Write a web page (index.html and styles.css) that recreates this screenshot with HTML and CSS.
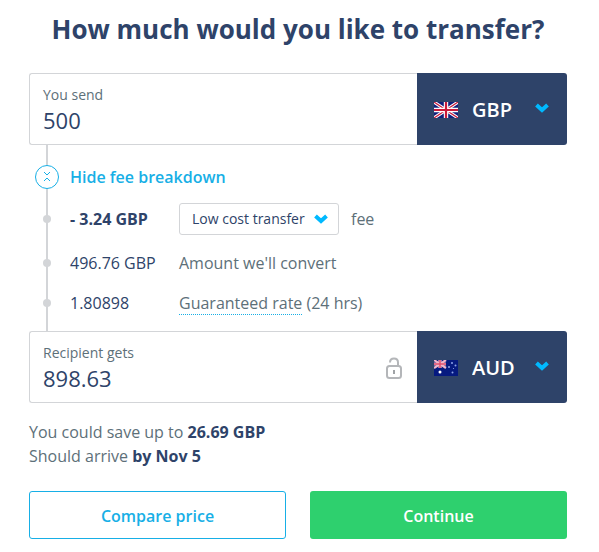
FILE: index.html
```html
<!DOCTYPE html>
<html lang="en">
<head>
<meta charset="utf-8">
<meta name="viewport" content="width=device-width, initial-scale=1">
<title>Transfer</title>
<link rel="stylesheet" href="styles.css">
</head>
<body>
<main class="calculator">
  <h1 class="title">How much would you like to transfer?</h1>
  <form>
    <div class="money">
      <div class="money-entry">
        <div class="money-text">
          <label class="money-label" for="send">You send</label>
          <input class="money-input" id="send" type="text" value="500">
        </div>
      </div>
      <div class="currency">
        <svg class="flag" viewBox="0 0 24 16" aria-hidden="true">
          <path fill="#10207c" d="M0 0h24v16H0z"/>
          <path stroke="#fff" stroke-width="3.2" d="M0 0l24 16M24 0L0 16"/>
          <path stroke="#c9193a" stroke-width="1.2" d="M0 0l24 16M24 0L0 16"/>
          <path stroke="#fff" stroke-width="4.4" d="M12 0v16M0 8h24"/>
          <path stroke="#c9193a" stroke-width="2.2" d="M12 0v16M0 8h24"/>
        </svg>
        <select class="currency-select" aria-label="Currency you send"><option>GBP</option></select>
        <svg class="chevron" viewBox="0 0 14 10" aria-hidden="true"><path d="M1.5 2L7 7l5.5-5"/></svg>
      </div>
    </div>

    <div class="breakdown">
      <button class="toggle" type="button">
        <svg class="toggle-icon" viewBox="0 0 24 24" aria-hidden="true">
          <circle cx="12" cy="12" r="11.5"/>
          <path d="M9 7l3 3 3-3M9 16l3-3 3 3"/>
        </svg>
        Hide fee breakdown
      </button>
      <ul class="steps">
        <li class="step">
          <span class="dot"></span>
          <strong class="amount">- 3.24 GBP</strong>
          <span class="detail fee">
            <span class="fee-box">
              <select class="fee-select" id="fee"><option>Low cost transfer</option></select>
              <svg class="chevron" viewBox="0 0 14 10" aria-hidden="true"><path d="M1.5 2L7 7l5.5-5"/></svg>
            </span>
            <label for="fee">fee</label>
          </span>
        </li>
        <li class="step">
          <span class="dot"></span>
          <span class="amount">496.76 GBP</span>
          <span class="detail">Amount we'll convert</span>
        </li>
        <li class="step">
          <span class="dot"></span>
          <span class="amount">1.80898</span>
          <span class="detail"><a class="rate" href="#">Guaranteed rate</a> (24 hrs)</span>
        </li>
      </ul>
    </div>

    <div class="money">
      <div class="money-entry">
        <div class="money-text">
          <label class="money-label" for="receive">Recipient gets</label>
          <input class="money-input" id="receive" type="text" value="898.63">
        </div>
        <svg class="lock" viewBox="0 0 16 22" aria-hidden="true">
          <rect x="1" y="9" width="14" height="12" rx="2.5"/>
          <path d="M4 5.5C4 3 5.5 1.5 8 1.5s4 1.500 4 4V9"/>
          <path class="keyhole" d="M7 13h2v4H7z"/>
        </svg>
      </div>
      <div class="currency">
        <svg class="flag" viewBox="0 0 24 16" aria-hidden="true">
          <path fill="#061a80" d="M0 0h24v16H0z"/>
          <path stroke="#f3b6c8" stroke-width="2.2" d="M0 0l12 8M12 0L0 8"/>
          <path stroke="#f3b6c8" stroke-width="3.2" d="M6 0v8M0 4h12"/>
          <path stroke="#e0506f" stroke-width="1.5" d="M6 0v8M0 4h12"/>
          <circle cx="6" cy="12" r="1.5" fill="#fff"/>
          <g fill="#8fa5e8">
            <circle cx="18" cy="3" r="1"/><circle cx="15" cy="7" r="1"/>
            <circle cx="21.5" cy="5.5" r="1"/><circle cx="18.5" cy="12.5" r="1"/>
            <circle cx="19.5" cy="8.5" r=".6"/>
          </g>
        </svg>
        <select class="currency-select" aria-label="Currency recipient gets"><option>AUD</option></select>
        <svg class="chevron" viewBox="0 0 14 10" aria-hidden="true"><path d="M1.5 2L7 7l5.5-5"/></svg>
      </div>
    </div>

    <p class="summary">You could save up to <strong>26.69 GBP</strong><br>Should arrive <strong>by Nov 5</strong></p>

    <div class="actions">
      <button class="button button-outline" type="button">Compare price</button>
      <button class="button button-primary" type="submit">Continue</button>
    </div>
  </form>
</main>
</body>
</html>
```
FILE: styles.css
```css
:root {
  --navy: #2e4369;
  --grey: #5d7079;
  --blue: #00b9ff;
  --link: #17afe6;
  --line: #d3d5d8;
}

* {
  box-sizing: border-box;
}

body {
  margin: 0;
  background: #fff;
  color: var(--grey);
  font: 16px/24px "Open Sans", "Noto Sans", sans-serif;
}

button,
input,
select {
  margin: 0;
  padding: 0;
  border: 0;
  background: none;
  color: inherit;
  font: inherit;
  appearance: none;
}

svg {
  display: block;
  flex: none;
  fill: none;
}

strong {
  color: var(--navy);
  font-weight: 700;
}

.calculator {
  padding: 9px 32px 12px 29px;
}

.title {
  margin: 0 0 24px;
  color: var(--navy);
  font-size: 26px;
  font-weight: 700;
  line-height: 40px;
  text-align: center;
}

.money {
  display: flex;
  height: 72px;
}

.money-entry {
  display: flex;
  flex: 1;
  align-items: center;
  min-width: 0;
  padding: 2px 15px 0 13px;
  border: 1px solid var(--line);
  border-right: 0;
  border-radius: 3px 0 0 3px;
}

.money-text {
  flex: 1;
  min-width: 0;
}

.money-label {
  display: block;
  font-size: 14px;
  line-height: 20px;
}

.money-input {
  display: block;
  width: 100%;
  height: 30px;
  color: var(--navy);
  font-size: 22px;
}

.lock {
  width: 16px;
  height: 22px;
  stroke: #b4b6b9;
  stroke-width: 2;
}

.lock .keyhole {
  fill: #a0a3a6;
  stroke: none;
}

.currency {
  display: flex;
  flex: none;
  align-items: center;
  width: 150px;
  padding: 2px 18px 0 17px;
  border-radius: 0 3px 3px 0;
  background: var(--navy);
}

.flag {
  width: 24px;
  height: 16px;
  margin-right: 14px;
}

.currency-select {
  flex: 1;
  min-width: 0;
  height: 40px;
  color: #fff;
  font-size: 20px;
  font-weight: 600;
}

.chevron {
  width: 14px;
  height: 10px;
  stroke: var(--blue);
  stroke-width: 4;
}

.currency .chevron {
  margin-bottom: 5px;
}

.breakdown {
  padding: 20px 0 16px;
  background: linear-gradient(var(--line), var(--line)) 17px 0 / 2px 100% no-repeat;
}

.toggle {
  display: flex;
  gap: 11px;
  margin-left: 6px;
  color: var(--link);
  font-weight: 600;
}

.toggle-icon {
  width: 24px;
  height: 24px;
  stroke: var(--link);
}

.toggle-icon circle {
  fill: #fff;
}

.steps {
  display: grid;
  gap: 16px;
  margin: 14px 0 0;
  padding: 0;
  list-style: none;
}

.step {
  display: grid;
  grid-template-columns: 8px 90px 1fr;
  column-gap: 19px;
  align-items: center;
  padding-left: 14px;
}

.dot {
  height: 8px;
  border-radius: 50%;
  background: var(--line);
}

.amount {
  color: var(--navy);
  white-space: nowrap;
}

.fee {
  display: flex;
  gap: 12px;
  align-items: center;
}

.fee-box {
  display: flex;
  align-items: center;
  width: 160px;
  height: 32px;
  padding: 0 10px 0 12px;
  border: 1px solid var(--line);
  border-radius: 3px;
}

.fee-select {
  flex: 1;
  min-width: 0;
  height: 30px;
  color: var(--navy);
  font-size: 14px;
}

.rate {
  border-bottom: 1px dotted var(--link);
  color: inherit;
  text-decoration: none;
}

.summary {
  margin: 17px 0 23px;
}

.actions {
  display: grid;
  grid-template-columns: 1fr 1fr;
  gap: 24px;
}

.button {
  height: 48px;
  padding-top: 2px;
  border-radius: 3px;
  font-weight: 600;
}

.button-outline {
  border: 1px solid var(--link);
  color: var(--link);
}

.button-primary {
  background: #2ed06e;
  color: #fff;
}
```
